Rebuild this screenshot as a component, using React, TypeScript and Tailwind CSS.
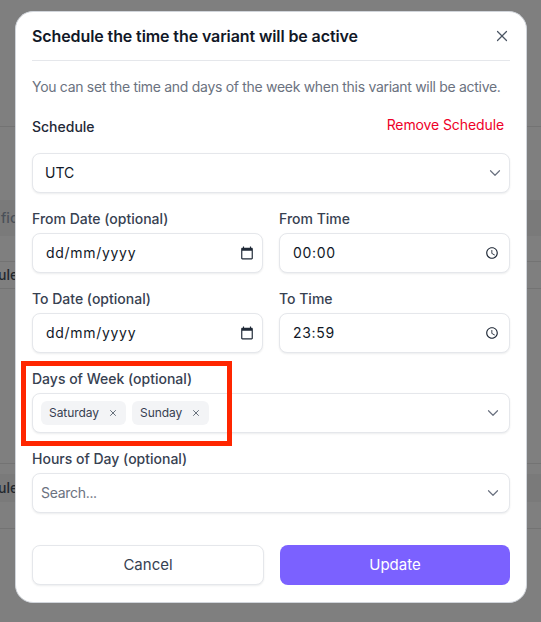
import { ChevronDown, X } from 'lucide-react'

function CalendarIcon() {
  return (
    <svg viewBox="0 0 24 24" className="w-[14px] h-[14px] text-[#1f2937]" fill="currentColor">
      <path d="M20 3h-1V1h-2v2H7V1H5v2H4c-1.1 0-2 .9-2 2v16c0 1.1.9 2 2 2h16c1.1 0 2-.9 2-2V5c0-1.1-.9-2-2-2zm0 18H4V8h16v13z" />
    </svg>
  )
}

function ClockIcon() {
  return (
    <svg viewBox="0 0 24 24" className="w-[14px] h-[14px] text-[#1f2937]" fill="currentColor">
      <path d="M11.99 2C6.47 2 2 6.48 2 12s4.47 10 9.99 10C17.52 22 22 17.52 22 12S17.52 2 11.99 2zM12 20c-4.42 0-8-3.58-8-8s3.58-8 8-8 8 3.58 8 8-3.58 8-8 8zm.5-13H11v6l5.25 3.15.75-1.23-4.5-2.67z" />
    </svg>
  )
}

const boxClass =
  'h-10 flex items-center justify-between bg-white border border-[#e5e7eb] rounded-lg shadow-[0_1px_2px_rgba(16,24,40,0.08)]'

function Label({ text }: { text: string }) {
  return <label className="block h-5 mb-1 text-sm leading-5 font-medium text-[#374151]">{text}</label>
}

function NativeField({ label, value, icon }: { label: string; value: string; icon: 'date' | 'time' }) {
  return (
    <div>
      <Label text={label} />
      <div className={`${boxClass} pl-[13px] ${icon === 'date' ? 'pr-2' : 'pr-[10px]'}`}>
        <span className="text-sm tracking-[0.7px] text-[#111827]">{value}</span>
        {icon === 'date' ? <CalendarIcon /> : <ClockIcon />}
      </div>
    </div>
  )
}

function Chip({ text }: { text: string }) {
  return (
    <span className="h-6 flex items-center gap-[9px] px-2 rounded-md bg-[#f3f4f6] text-xs tracking-[-0.05px] text-[#374151]">
      {text}
      <X className="w-[10px] h-[10px] text-[#4b5563]" strokeWidth={2} />
    </span>
  )
}

export default function App() {
  return (
    <div className="relative h-[622px] w-[541px] overflow-hidden bg-[#7f7f7f] font-['Inter',sans-serif]">
      {/* Page behind the dialog */}
      <div className="absolute inset-0 flex flex-col text-sm font-medium">
        <div className="h-[127px] border-b border-[#737373]"></div>
        <div className="h-[73px]"></div>
        <div className="h-[36px] bg-[#7a7a7a] text-[#4a5058] flex items-center">
          <span className="ml-[1px]">fic</span>
        </div>
        <div className="h-[26px] border-b border-[#737373]"></div>
        <div className="h-[27px] border-b border-[#737373] text-[#23272e] flex items-center">
          <span className="-ml-[2px]">ule</span>
        </div>
        <div className="h-[175px] border-b border-[#737373]"></div>
        <div className="h-[65px] border-b border-[#737373]">
          <div className="mt-[10px] h-[28px] bg-[#7a7a7a] text-[#23272e] flex items-center">
            <span className="-ml-[11px]">Rule</span>
          </div>
        </div>
      </div>

      {/* Dialog */}
      <div className="absolute left-[15px] top-[11px] w-[512px] h-[592px] bg-white rounded-[18px] border border-[#d1d5db] px-4">
        <div className="h-[49px] flex items-center justify-between border-b border-[#e5e7eb]">
          <h2 className="text-[16px] font-semibold tracking-[-0.1px] text-[#111827]">
            Schedule the time the variant will be active
          </h2>
          <X className="w-[18px] h-[18px] text-[#4b5563] -mr-[1px]" strokeWidth={1.6} />
        </div>

        <p className="mt-[16px] text-sm leading-5 tracking-[-0.3px] whitespace-nowrap text-[#6b7280]">
          You can set the time and days of the week when this variant will be active.
        </p>

        <div className="mt-[20px] h-5 flex items-center justify-between">
          <span className="text-sm font-medium text-[#1f2937]">Schedule</span>
          <span className="text-sm tracking-[-0.1px] text-[#ee0027] pr-[6px] -mt-1">Remove Schedule</span>
        </div>

        <div className={`${boxClass} mt-4 pl-3 pr-[5px]`}>
          <span className="text-sm text-[#111827]">UTC</span>
          <ChevronDown className="w-[18px] h-[18px] text-[#6b7280]" strokeWidth={1.6} />
        </div>

        <div className="mt-4 grid grid-cols-2 gap-4">
          <NativeField label="From Date (optional)" value="dd/mm/yyyy" icon="date" />
          <NativeField label="From Time" value="00:00" icon="time" />
          <NativeField label="To Date (optional)" value="dd/mm/yyyy" icon="date" />
          <NativeField label="To Time" value="23:59" icon="time" />
        </div>

        <div className="mt-4">
          <Label text="Days of Week (optional)" />
          <div className={`${boxClass} pl-2 pr-[7px]`}>
            <div className="flex gap-[6px]">
              <Chip text="Saturday" />
              <Chip text="Sunday" />
            </div>
            <ChevronDown className="w-[18px] h-[18px] text-[#6b7280]" strokeWidth={1.6} />
          </div>
        </div>

        <div className="mt-4">
          <Label text="Hours of Day (optional)" />
          <div className={`${boxClass} pl-2 pr-[7px]`}>
            <span className="text-sm tracking-[-0.3px] text-[#6b7280]">Search...</span>
            <ChevronDown className="w-[18px] h-[18px] text-[#6b7280]" strokeWidth={1.6} />
          </div>
        </div>

        <div className="mt-8 grid grid-cols-[232px_230px] gap-4">
          <button className={`${boxClass} justify-center! text-[15px] text-[#374151]`}>Cancel</button>
          <button className="h-10 rounded-lg bg-[#7b61ff] text-[15px] text-white">Update</button>
        </div>
      </div>

      {/* Red annotation box */}
      <div className="absolute left-[21px] top-[361px] w-[211px] h-[85px] border-[5px] border-[#ff2600]"></div>
    </div>
  )
}
